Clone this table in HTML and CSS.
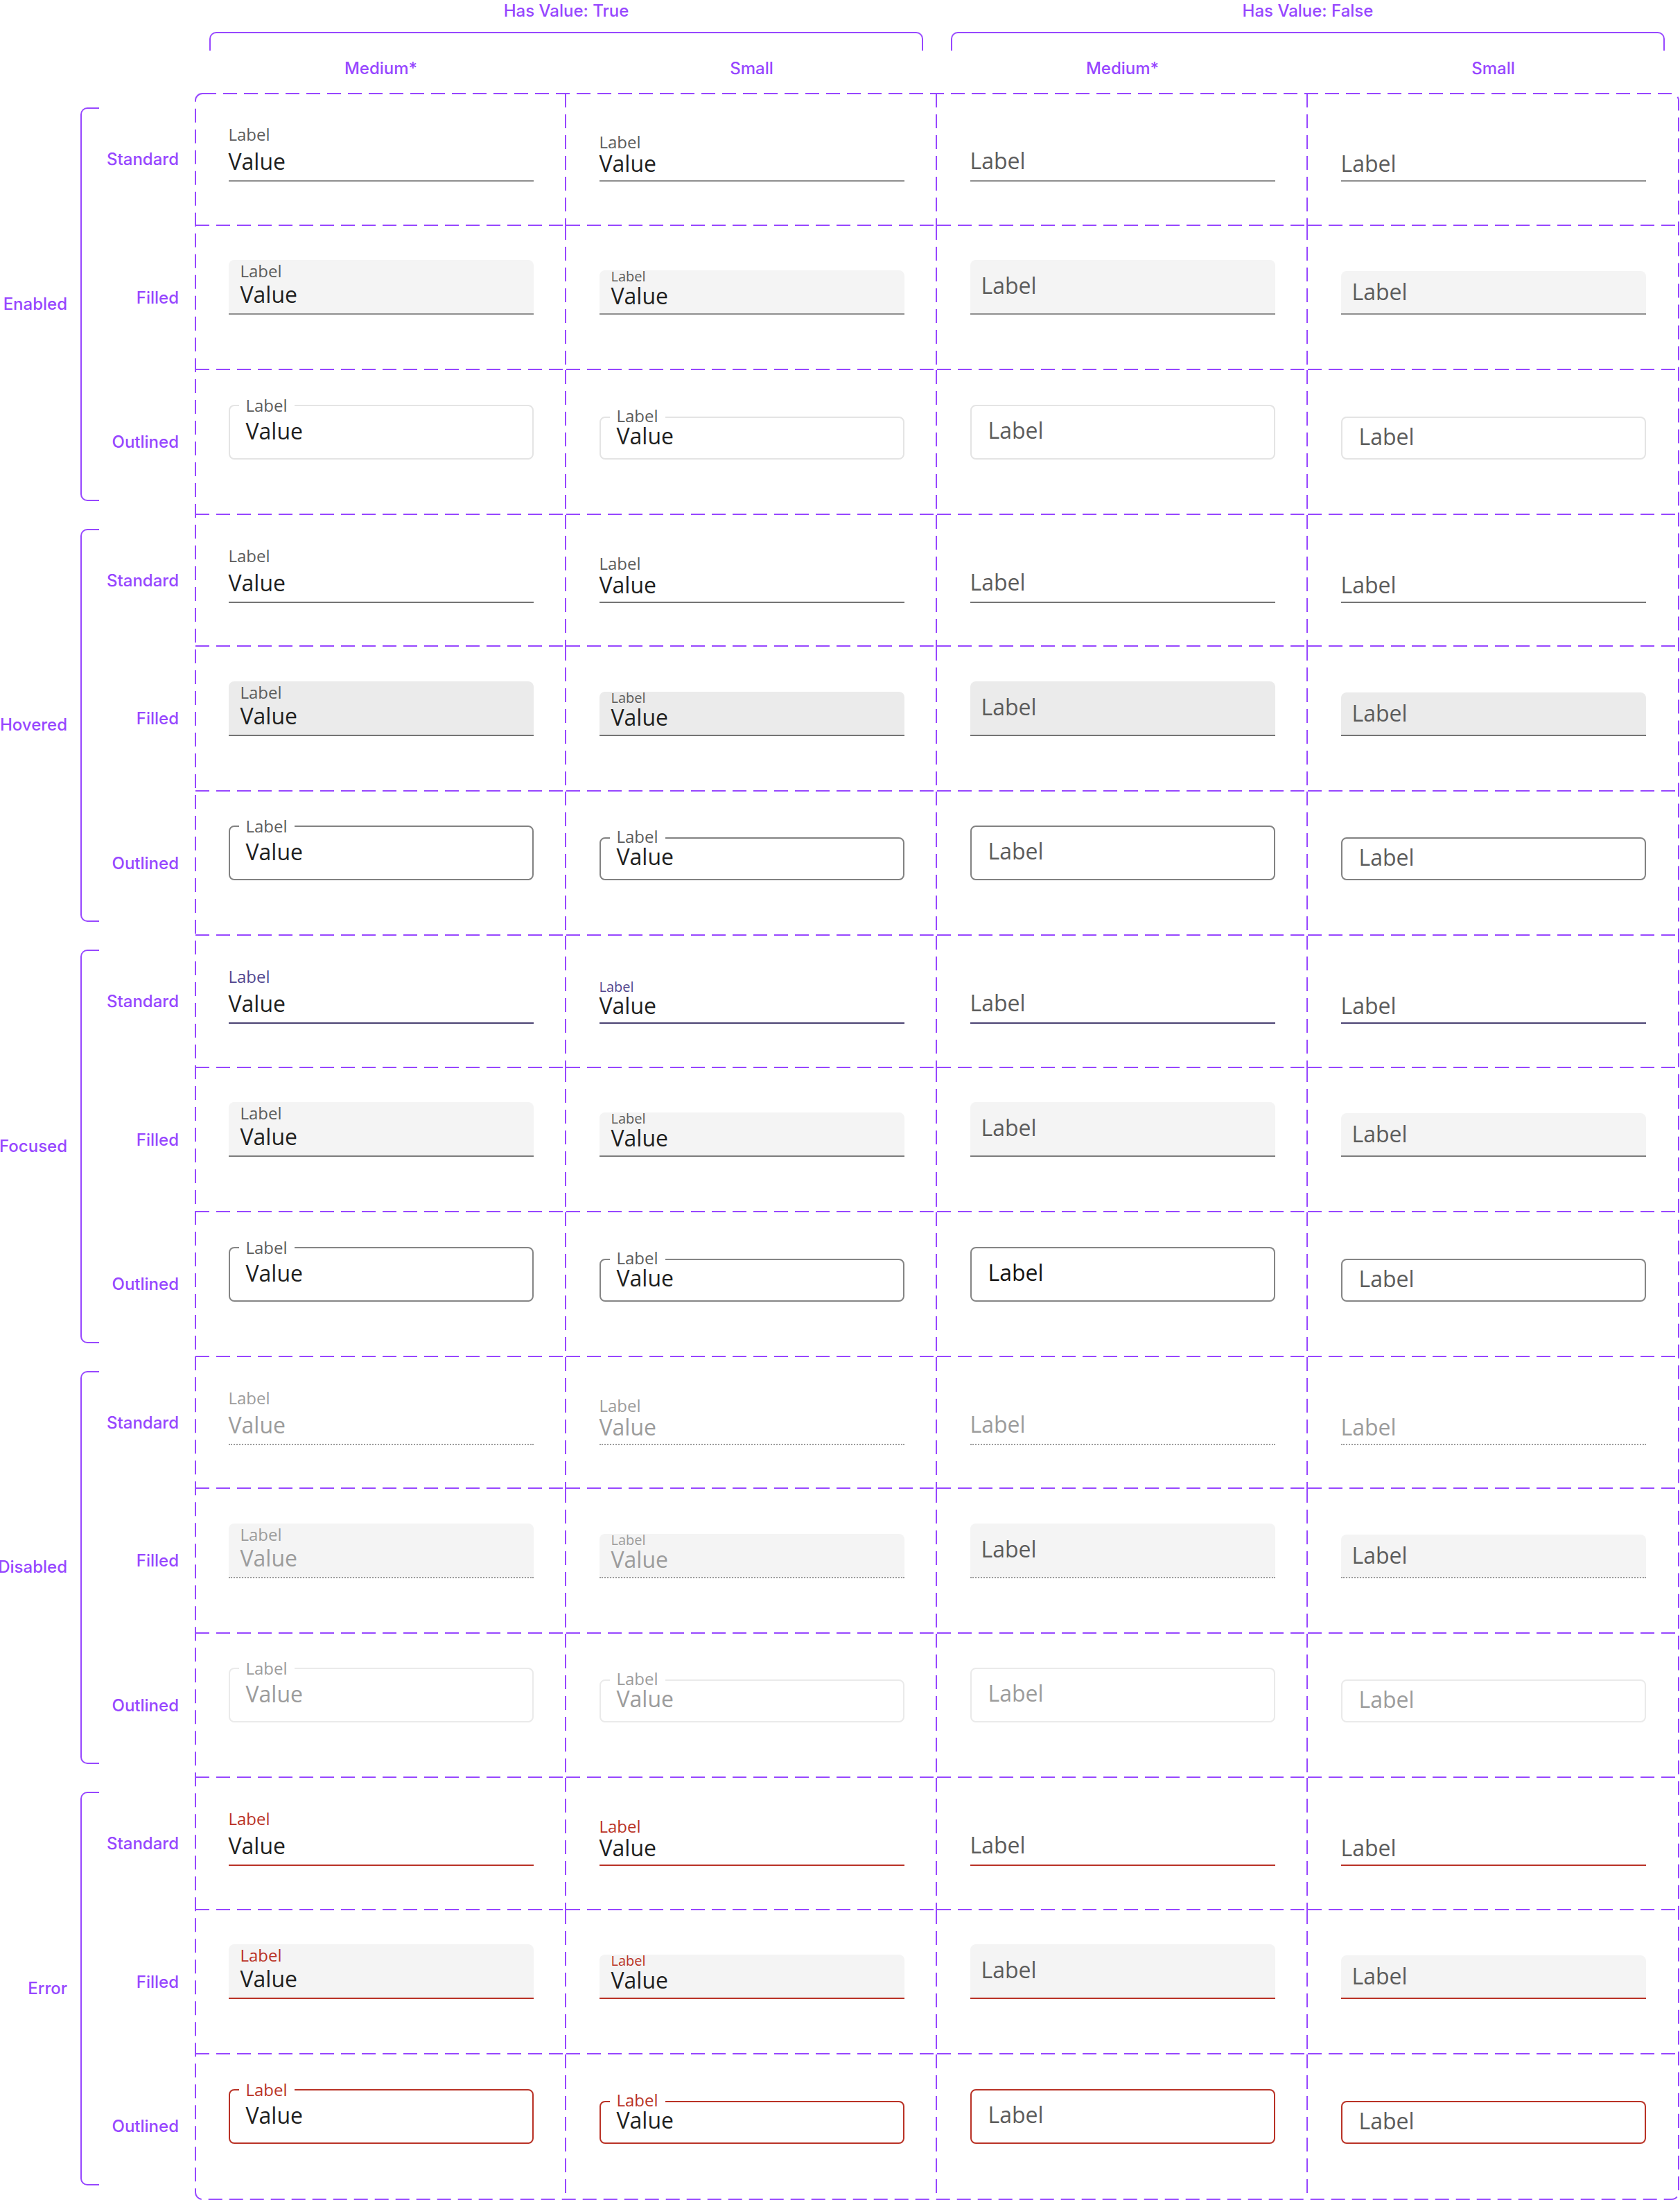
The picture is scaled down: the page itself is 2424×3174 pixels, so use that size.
FILE: index.html
```html
<!DOCTYPE html>
<html lang="en">
<head>
<meta charset="utf-8">
<title>Text Field – variants</title>
<link rel="stylesheet" href="styles.css">
</head>
<body>
<div class="page">
  <div class="corner"></div>

  <header class="col-head">
    <div class="hgroups">
      <div class="hgroup">
        <div class="tag htitle">Has Value: True</div>
        <div class="hbrace"></div>
      </div>
      <div class="hgroup">
        <div class="tag htitle">Has Value: False</div>
        <div class="hbrace"></div>
      </div>
    </div>
    <div class="hcols">
      <div class="tag hcol">Medium*</div>
      <div class="tag hcol">Small</div>
      <div class="tag hcol">Medium*</div>
      <div class="tag hcol">Small</div>
    </div>
  </header>

  <aside class="row-head">
    <div class="group">
      <div class="tag gname">Enabled</div>
      <div class="gbrace"></div>
      <div class="rnames"><div class="tag rname">Standard</div><div class="tag rname">Filled</div><div class="tag rname">Outlined</div></div>
    </div>
    <div class="group">
      <div class="tag gname">Hovered</div>
      <div class="gbrace"></div>
      <div class="rnames"><div class="tag rname">Standard</div><div class="tag rname">Filled</div><div class="tag rname">Outlined</div></div>
    </div>
    <div class="group">
      <div class="tag gname">Focused</div>
      <div class="gbrace"></div>
      <div class="rnames"><div class="tag rname">Standard</div><div class="tag rname">Filled</div><div class="tag rname">Outlined</div></div>
    </div>
    <div class="group">
      <div class="tag gname">Disabled</div>
      <div class="gbrace"></div>
      <div class="rnames"><div class="tag rname">Standard</div><div class="tag rname">Filled</div><div class="tag rname">Outlined</div></div>
    </div>
    <div class="group">
      <div class="tag gname">Error</div>
      <div class="gbrace"></div>
      <div class="rnames"><div class="tag rname">Standard</div><div class="tag rname">Filled</div><div class="tag rname">Outlined</div></div>
    </div>
  </aside>

  <main class="board">
    <div class="grid">
      <!-- Enabled -->
      <div class="cell r-std s-en"><div class="tf std m"><span class="lbl">Label</span><span class="val">Value</span></div></div>
      <div class="cell r-std s-en"><div class="tf std s"><span class="lbl">Label</span><span class="val">Value</span></div></div>
      <div class="cell r-std s-en"><div class="tf std m empty"><span class="ph">Label</span></div></div>
      <div class="cell r-std s-en"><div class="tf std s empty"><span class="ph">Label</span></div></div>

      <div class="cell r-fil s-en"><div class="tf fil m"><span class="lbl">Label</span><span class="val">Value</span></div></div>
      <div class="cell r-fil s-en"><div class="tf fil s"><span class="lbl">Label</span><span class="val">Value</span></div></div>
      <div class="cell r-fil s-en"><div class="tf fil m empty"><span class="ph">Label</span></div></div>
      <div class="cell r-fil s-en"><div class="tf fil s empty"><span class="ph">Label</span></div></div>

      <div class="cell r-out s-en"><fieldset class="tf out m"><legend class="lbl">Label</legend><span class="val">Value</span></fieldset></div>
      <div class="cell r-out s-en"><fieldset class="tf out s"><legend class="lbl">Label</legend><span class="val">Value</span></fieldset></div>
      <div class="cell r-out s-en"><div class="tf out m empty"><span class="ph">Label</span></div></div>
      <div class="cell r-out s-en"><div class="tf out s empty"><span class="ph">Label</span></div></div>

      <!-- Hovered -->
      <div class="cell r-std s-hov"><div class="tf std m"><span class="lbl">Label</span><span class="val">Value</span></div></div>
      <div class="cell r-std s-hov"><div class="tf std s"><span class="lbl">Label</span><span class="val">Value</span></div></div>
      <div class="cell r-std s-hov"><div class="tf std m empty"><span class="ph">Label</span></div></div>
      <div class="cell r-std s-hov"><div class="tf std s empty"><span class="ph">Label</span></div></div>

      <div class="cell r-fil s-hov"><div class="tf fil m"><span class="lbl">Label</span><span class="val">Value</span></div></div>
      <div class="cell r-fil s-hov"><div class="tf fil s"><span class="lbl">Label</span><span class="val">Value</span></div></div>
      <div class="cell r-fil s-hov"><div class="tf fil m empty"><span class="ph">Label</span></div></div>
      <div class="cell r-fil s-hov"><div class="tf fil s empty"><span class="ph">Label</span></div></div>

      <div class="cell r-out s-hov"><fieldset class="tf out m"><legend class="lbl">Label</legend><span class="val">Value</span></fieldset></div>
      <div class="cell r-out s-hov"><fieldset class="tf out s"><legend class="lbl">Label</legend><span class="val">Value</span></fieldset></div>
      <div class="cell r-out s-hov"><div class="tf out m empty"><span class="ph">Label</span></div></div>
      <div class="cell r-out s-hov"><div class="tf out s empty"><span class="ph">Label</span></div></div>

      <!-- Focused -->
      <div class="cell r-std s-foc"><div class="tf std m"><span class="lbl">Label</span><span class="val">Value</span></div></div>
      <div class="cell r-std s-foc"><div class="tf std s"><span class="lbl">Label</span><span class="val">Value</span></div></div>
      <div class="cell r-std s-foc"><div class="tf std m empty"><span class="ph">Label</span></div></div>
      <div class="cell r-std s-foc"><div class="tf std s empty"><span class="ph">Label</span></div></div>

      <div class="cell r-fil s-foc"><div class="tf fil m"><span class="lbl">Label</span><span class="val">Value</span></div></div>
      <div class="cell r-fil s-foc"><div class="tf fil s"><span class="lbl">Label</span><span class="val">Value</span></div></div>
      <div class="cell r-fil s-foc"><div class="tf fil m empty"><span class="ph">Label</span></div></div>
      <div class="cell r-fil s-foc"><div class="tf fil s empty"><span class="ph">Label</span></div></div>

      <div class="cell r-out s-foc"><fieldset class="tf out m"><legend class="lbl">Label</legend><span class="val">Value</span></fieldset></div>
      <div class="cell r-out s-foc"><fieldset class="tf out s"><legend class="lbl">Label</legend><span class="val">Value</span></fieldset></div>
      <div class="cell r-out s-foc"><div class="tf out m empty"><span class="ph">Label</span></div></div>
      <div class="cell r-out s-foc"><div class="tf out s empty"><span class="ph">Label</span></div></div>

      <!-- Disabled -->
      <div class="cell r-std s-dis"><div class="tf std m"><span class="lbl">Label</span><span class="val">Value</span></div></div>
      <div class="cell r-std s-dis"><div class="tf std s"><span class="lbl">Label</span><span class="val">Value</span></div></div>
      <div class="cell r-std s-dis"><div class="tf std m empty"><span class="ph">Label</span></div></div>
      <div class="cell r-std s-dis"><div class="tf std s empty"><span class="ph">Label</span></div></div>

      <div class="cell r-fil s-dis"><div class="tf fil m"><span class="lbl">Label</span><span class="val">Value</span></div></div>
      <div class="cell r-fil s-dis"><div class="tf fil s"><span class="lbl">Label</span><span class="val">Value</span></div></div>
      <div class="cell r-fil s-dis"><div class="tf fil m empty"><span class="ph">Label</span></div></div>
      <div class="cell r-fil s-dis"><div class="tf fil s empty"><span class="ph">Label</span></div></div>

      <div class="cell r-out s-dis"><fieldset class="tf out m"><legend class="lbl">Label</legend><span class="val">Value</span></fieldset></div>
      <div class="cell r-out s-dis"><fieldset class="tf out s"><legend class="lbl">Label</legend><span class="val">Value</span></fieldset></div>
      <div class="cell r-out s-dis"><div class="tf out m empty"><span class="ph">Label</span></div></div>
      <div class="cell r-out s-dis"><div class="tf out s empty"><span class="ph">Label</span></div></div>

      <!-- Error -->
      <div class="cell r-std s-err"><div class="tf std m"><span class="lbl">Label</span><span class="val">Value</span></div></div>
      <div class="cell r-std s-err"><div class="tf std s"><span class="lbl">Label</span><span class="val">Value</span></div></div>
      <div class="cell r-std s-err"><div class="tf std m empty"><span class="ph">Label</span></div></div>
      <div class="cell r-std s-err"><div class="tf std s empty"><span class="ph">Label</span></div></div>

      <div class="cell r-fil s-err"><div class="tf fil m"><span class="lbl">Label</span><span class="val">Value</span></div></div>
      <div class="cell r-fil s-err"><div class="tf fil s"><span class="lbl">Label</span><span class="val">Value</span></div></div>
      <div class="cell r-fil s-err"><div class="tf fil m empty"><span class="ph">Label</span></div></div>
      <div class="cell r-fil s-err"><div class="tf fil s empty"><span class="ph">Label</span></div></div>

      <div class="cell r-out s-err"><fieldset class="tf out m"><legend class="lbl">Label</legend><span class="val">Value</span></fieldset></div>
      <div class="cell r-out s-err"><fieldset class="tf out s"><legend class="lbl">Label</legend><span class="val">Value</span></fieldset></div>
      <div class="cell r-out s-err"><div class="tf out m empty"><span class="ph">Label</span></div></div>
      <div class="cell r-out s-err"><div class="tf out s empty"><span class="ph">Label</span></div></div>
    </div>
  </main>
</div>
</body>
</html>
```
FILE: styles.css
```css
* { box-sizing: border-box; }

body {
  margin: 0;
  background: #ffffff;
}

.page {
  display: grid;
  grid-template-columns: 281px 2142px;
  grid-template-rows: 134px auto;
  width: 2424px;
}

/* purple Figma-style annotations */
.tag {
  font-family: Inter, "Liberation Sans", sans-serif;
  font-size: 24px;
  font-weight: 500;
  line-height: 32px;
  color: #9747FF;
  white-space: nowrap;
}

/* ---------- column header ---------- */
.col-head { padding-left: 1px; }

.hgroups {
  display: grid;
  grid-template-columns: 1070px 1070px;
}

.hgroup {
  display: flex;
  flex-direction: column;
}

.htitle { text-align: center; }

.hbrace {
  margin: 14px 20px 0;
  height: 27px;
  border: 2px solid #9747FF;
  border-bottom: 0;
  border-radius: 10px 10px 0 0;
}

.hcols {
  display: grid;
  grid-template-columns: repeat(4, 535px);
  margin-top: 10px;
}

.hcol { text-align: center; }

/* ---------- row header ---------- */
.row-head { padding-top: 1px; }

.group {
  display: flex;
  height: 607.5px;
}

.gname {
  width: 97px;
  display: flex;
  align-items: center;
  justify-content: flex-end;
}

.gbrace {
  width: 27px;
  margin: 20px 0 20px 19px;
  border: 2px solid #9747FF;
  border-right: 0;
  border-radius: 10px 0 0 10px;
}

.rnames {
  width: 138px;
  display: grid;
  grid-template-rows: 190.5px 208.5px 208.5px;
  padding-right: 23px;
}

.rname {
  display: flex;
  align-items: center;
  justify-content: flex-end;
}

/* ---------- variant board ---------- */
.board {
  padding: 1px;
  background: url("data:image/svg+xml,%3Csvg xmlns='http://www.w3.org/2000/svg' width='2142' height='3040'%3E%3Crect x='1' y='1' width='2140' height='3037.5' rx='10' fill='none' stroke='%239747FF' stroke-width='2' stroke-dasharray='20 10'/%3E%3C/svg%3E") no-repeat left top;
}

.grid {
  display: grid;
  grid-template-columns: repeat(4, 535px);
  grid-template-rows: repeat(5, 190.5px 208.5px 208.5px);
}

.cell {
  display: flex;
  justify-content: center;
  align-items: flex-end;
  background:
    repeating-linear-gradient(to bottom, #9747FF 0 20px, transparent 20px 30px) right top / 2px 100% no-repeat,
    repeating-linear-gradient(to right, #9747FF 0 20px, transparent 20px 30px) left bottom / 100% 2px no-repeat;
}

.cell:nth-child(4n) {
  background:
    repeating-linear-gradient(to right, #9747FF 0 20px, transparent 20px 30px) left bottom / 100% 2px no-repeat;
}

.cell:nth-last-child(-n+4) {
  background:
    repeating-linear-gradient(to bottom, #9747FF 0 20px, transparent 20px 30px) right top / 2px 100% no-repeat;
}

.cell:last-child { background: none; }

.r-std { padding-bottom: 63.5px; }
.r-fil,
.r-out { padding-bottom: 80px; }

/* ---------- text field ---------- */
.tf {
  width: 440px;
  font-family: "Open Sans", "Liberation Sans", sans-serif;
  font-weight: 400;
  margin: 0;
  min-width: 0;
}

.lbl {
  display: block;
  font-size: 24px;
  line-height: 28px;
  color: #5c5c5c;
}

.val {
  display: block;
  font-size: 32px;
  line-height: 34px;
  color: #1f1f1f;
}

.ph {
  display: block;
  font-size: 32px;
  line-height: 40px;
  color: #5c5c5c;
}

/* standard */
.std { border-bottom: 2px solid #8f8f8f; }
.std.m { padding-bottom: 7px; }
.std.m .lbl { line-height: 32px; }
.std.m .val { margin-top: 3px; line-height: 40px; }
.std.s { padding-bottom: 7px; }
.std.m.empty { padding-bottom: 8px; }
.std.s.empty { padding-bottom: 4px; }

/* filled */
.fil {
  background: #f4f4f4;
  border-radius: 8px 8px 0 0;
  border-bottom: 2px solid #8f8f8f;
  padding-left: 17px;
}
.fil.m { padding-top: 2px; padding-bottom: 10px; }
.fil.m .val { margin-top: 3px; }
.fil.s { padding-top: 0; padding-bottom: 8px; }
.fil.s .lbl { font-size: 20px; line-height: 18px; }
.fil.s .val { margin-top: 2px; }
.fil.m.empty { height: 79px; padding: 17px 0 0 16px; }
.fil.s.empty { height: 63px; padding: 10px 0 0 16px; }

/* outlined */
.out {
  border: 2px solid #e4e4e4;
  border-radius: 8px;
}
fieldset.out { padding: 0 13px 19px; }
fieldset.out .lbl { padding: 0 10px; }
fieldset.out .val { padding-left: 10px; }
.out.m .val { margin-top: 3px; line-height: 40px; }
fieldset.out.s .lbl { line-height: 24px; padding-bottom: 4px; }
fieldset.out.s { padding-bottom: 18px; }
.out.s .val { margin-top: -1px; line-height: 28px; }
.out.m.empty { height: 79px; padding: 15px 0 0 24px; }
.out.s.empty { height: 62px; padding: 7px 0 0 24px; }

/* ---------- states ---------- */
.s-hov .std { border-bottom-color: #747474; }
.s-hov .fil { background: #ebebeb; border-bottom-color: #747474; }
.s-hov .out { border-color: #828282; }

.s-foc .std { border-bottom-color: #4a4272; }
.s-foc .std .lbl { color: #51468f; }
.s-foc .std.s .lbl { font-size: 20px; line-height: 20px; }
.s-foc .fil { border-bottom-color: #7c7c7c; }
.s-foc .out { border-color: #858585; }
.s-foc .out.m.empty .ph { color: #141414; }

.s-dis .lbl,
.s-dis .val,
.s-dis .ph { color: #9c9c9c; }
.s-dis .std,
.s-dis .fil { border-bottom: 2px dotted #9c9c9c; }
.s-dis .fil.empty .ph { color: #5c5c5c; }
.s-dis .out { border-color: #eaeaea; }

.s-err .lbl { color: #b93226; }
.s-err .std,
.s-err .fil { border-bottom-color: #b93226; }
.s-err .out { border-color: #b93226; }
```
